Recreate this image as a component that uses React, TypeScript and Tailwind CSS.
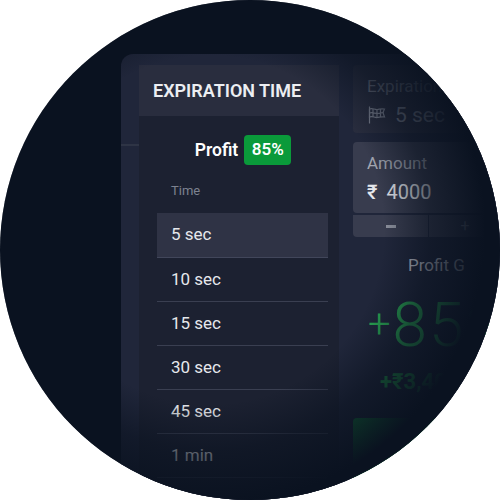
const times = ['10 sec', '15 sec', '30 sec', '45 sec', '1 min'];

function FlagIcon() {
  return (
    <svg width="20" height="20" viewBox="0 0 20 20" fill="none" stroke="currentColor" strokeWidth="1.2" className="shrink-0">
      <path d="M2.500 1.500v17" />
      <path d="M2.500 4c3-1.500 5 1 8 .5s4-1 7-.5l-1.500 3.500 1.500 4.500c-3-.5-4 0-7 .5s-5-2-8-.5z" />
      <path d="M6 4v8M10 4.500v8M13.500 4v8M2.500 8c3-1 5 .5 8 .5s4-1 6-1" />
    </svg>
  );
}

export default function App() {
  return (
    <div className="w-[500px] h-[500px] bg-white font-['Roboto',sans-serif]">
      <div className="relative w-[500px] h-[500px] rounded-full overflow-hidden bg-[#0a1220] pl-[121px] pt-[54px]">
        <div className="flex w-[420px] h-[500px] rounded-tl-xl bg-[#20263a]">
          {/* left strip */}
          <div className="w-[18px] shrink-0 pt-[90px]">
            <div className="h-[2px] bg-[#2e3445]" />
          </div>

          {/* expiration modal */}
          <div className="w-[200px] shrink-0 mt-[11px] bg-[#1c2131] flex flex-col">
            <div className="h-[51px] shrink-0 bg-[#292d3e] pl-[14px] flex items-center text-[18px] font-semibold text-[#eceef2] whitespace-nowrap">
              EXPIRATION TIME
            </div>
            <div className="flex items-center justify-center gap-[6px] mt-[19px] h-[30px] pl-[8px] text-white">
              <span className="text-[17.500px] font-semibold">Profit</span>
              <span className="h-[30px] w-[47px] rounded bg-[#0a9a3a] flex items-center justify-center text-[17px] font-semibold">85%</span>
            </div>
            <div className="ml-[32px] mt-[18px] text-[13px] leading-[16px] text-[#7d8290]">Time</div>
            <div className="ml-[18px] mr-[11px] mt-[14px]">
              <div className="h-[45px] pl-[14px] flex items-center bg-[#2f3345] border-b border-[#41465a] text-[17px] text-[#e6e8ec]">
                5 sec
              </div>
              {times.map((t) => (
                <div key={t} className="h-[44px] pl-[14px] flex items-center border-b border-[#3a3f51] text-[17px] text-[#e6e8ec]">
                  {t}
                </div>
              ))}
            </div>
          </div>

          {/* right column */}
          <div className="ml-[14px] mt-[11px] w-[188px] shrink-0 flex flex-col">
            <div className="h-[68px] rounded bg-[#292d3e] pl-[14px] pt-[10px]">
              <div className="text-[17px] leading-[22px] text-[#6f7482]">Expiration</div>
              <div className="flex items-center gap-[8px] mt-[6px] text-[21px] leading-[24px] text-[#7d8290]">
                <FlagIcon />
                5 sec
              </div>
            </div>
            <div className="h-[71px] mt-[9px] rounded bg-[#383c4e] pl-[14px] pt-[10px]">
              <div className="text-[17px] leading-[22px] text-[#a4a8b2]">Amount</div>
              <div className="flex items-center gap-[9px] mt-[6px] text-[20px] leading-[24px] text-[#e6e8ec]">
                <span className="font-medium">₹</span>
                4000
              </div>
            </div>
            <div className="flex gap-px h-[22px] mt-[2px]">
              <div className="w-[75px] rounded-bl bg-[#383c4e] flex items-center justify-center">
                <div className="w-[10px] h-[3px] bg-[#8b8f9b]" />
              </div>
              <div className="flex-1 rounded-br bg-[#383c4e] flex items-center justify-center pr-[40px] text-[16px] text-[#8b8f9b]">+</div>
            </div>
            <div className="mt-[17px] pl-[55px] text-[17px] leading-[22px] text-[#c4c7cf] whitespace-nowrap">Profit G</div>
            <div className="mt-[13px] pl-[15px] h-[72px] flex items-center font-light text-[#2bb055] whitespace-nowrap">
              <span className="text-[40px] mr-[2px]">+</span>
              <span className="text-[62px] leading-[72px] tracking-[2px]">85</span>
              <span className="text-[40px] ml-[2px]">%</span>
            </div>
            <div className="mt-[8px] pl-[27px] text-[22px] leading-[26px] font-bold text-[#22a34a] whitespace-nowrap">+₹3,400</div>
            <div className="mt-[23px] h-[80px] rounded bg-[linear-gradient(135deg,#12853a,#0a3d22)]" />
          </div>
        </div>

        {/* dark fade over the panels */}
        <div className="absolute inset-0 bg-[radial-gradient(circle_290px_at_210px_230px,rgba(10,18,32,0)_60%,rgba(10,18,32,0.62)_76%,rgba(10,18,32,1)_95%)]" />
      </div>
    </div>
  );
}
